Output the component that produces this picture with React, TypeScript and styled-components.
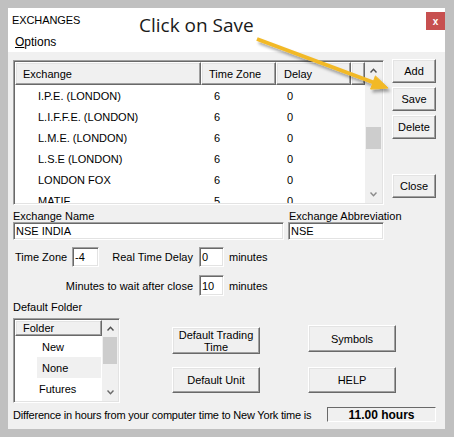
import styled, { createGlobalStyle } from 'styled-components';

const GlobalStyle = createGlobalStyle`
    html, body {
        margin: 0;
        padding: 0;
        background: #c0c0c0;
    }
    body {
        font-family: "Liberation Sans", Arial, sans-serif;
        font-size: 11px;
        color: #000;
    }
`;

const raised = `
    border: 1px solid;
    border-color: #ffffff #696969 #696969 #ffffff;
    box-shadow: inset -1px -1px #a0a0a0, inset 1px 1px #e3e3e3;
`;

const sunken = `
    border: 1px solid;
    border-color: #a0a0a0 #ffffff #ffffff #a0a0a0;
    box-shadow: inset 1px 1px #696969, inset -1px -1px #e3e3e3;
`;

const Screen = styled.div`
    padding: 8px 9px 8px 8px;
    width: 454px;
    height: 437px;
    box-sizing: border-box;
`;

const Window = styled.div`
    position: relative;
    width: 437px;
    height: 421px;
    display: flex;
    flex-direction: column;
    background: #f0f0f0;
`;

const TitleBar = styled.div`
    height: 24px;
    display: flex;
    align-items: flex-start;
    justify-content: space-between;
    background: #fff;
`;

const Title = styled.div`
    padding: 6px 0 0 4px;
    font-size: 11px;
    line-height: 12px;
    letter-spacing: -0.1px;
`;

const CloseBox = styled.div`
    margin-top: 4px;
    width: 19px;
    height: 18px;
    background: #c75050;
    color: #fff;
    font-weight: bold;
    font-size: 10px;
    display: flex;
    align-items: center;
    justify-content: center;
`;

const MenuBar = styled.div`
    height: 20px;
    display: flex;
    align-items: center;
    padding-left: 7px;
    background: #fff;
    font-size: 12px;
`;

const Annotation = styled.div`
    position: absolute;
    left: 131px;
    top: 4px;
    font-family: "Open Sans", sans-serif;
    font-size: 19px;
    color: #1a1a1a;
    line-height: 26px;
`;

const ArrowLayer = styled.svg`
    position: absolute;
    left: 0;
    top: 0;
    pointer-events: none;
`;

const Body = styled.div`
    flex: 1;
    display: flex;
    flex-direction: column;
    padding: 8px 9px 7px 5px;
`;

const TopRow = styled.div`
    display: flex;
    gap: 8px;
`;

const ListBox = styled.div`
    ${sunken}
    width: 371px;
    height: 145px;
    box-sizing: border-box;
    display: grid;
    grid-template-columns: 1fr 17px;
    background: #fff;
    padding: 1px;
`;

const ListMain = styled.div`
    display: flex;
    flex-direction: column;
    overflow: hidden;
`;

const HeaderRow = styled.div<{ $h: number }>`
    display: flex;
    height: ${(p) => p.$h}px;
    flex-shrink: 0;
`;

const HeaderCell = styled.div<{ $w?: number }>`
    ${raised}
    background: #f0f0f0;
    box-sizing: border-box;
    width: ${(p) => (p.$w ? `${p.$w}px` : 'auto')};
    flex: ${(p) => (p.$w ? 'none' : '1')};
    display: flex;
    align-items: center;
    padding-left: 7px;
`;

const Row = styled.div`
    display: flex;
    height: 21px;
    flex-shrink: 0;
    align-items: center;
`;

const Cell = styled.div<{ $w: number; $pad: number }>`
    width: ${(p) => p.$w}px;
    padding-left: ${(p) => p.$pad}px;
    box-sizing: border-box;
    white-space: nowrap;
`;

const Scrollbar = styled.div`
    display: flex;
    flex-direction: column;
    background: #f0f0f0;
`;

const ScrollArrow = styled.div<{ $h: number; $c: string }>`
    height: ${(p) => p.$h}px;
    display: flex;
    align-items: center;
    justify-content: center;
    color: ${(p) => p.$c};
    flex-shrink: 0;
`;

const Track = styled.div`
    flex: 1;
`;

const Thumb = styled.div<{ $top: number; $h: number }>`
    margin: ${(p) => p.$top}px 1px 0 1px;
    height: ${(p) => p.$h}px;
    background: #cdcdcd;
`;

const ButtonCol = styled.div`
    display: flex;
    flex-direction: column;
    gap: 4px;
    margin-top: -1px;
`;

const Button = styled.div<{ $w: number; $h: number; $mt?: number }>`
    ${raised}
    width: ${(p) => p.$w}px;
    height: ${(p) => p.$h}px;
    margin-top: ${(p) => p.$mt ?? 0}px;
    box-sizing: border-box;
    background: #f0f0f0;
    display: flex;
    align-items: center;
    justify-content: center;
    text-align: center;
    line-height: 12px;
    padding: 0 2px;
`;

const FieldGrid = styled.div`
    margin-top: 5px;
    display: grid;
    grid-template-columns: 271px 96px;
    grid-template-rows: 12px 18px;
    column-gap: 4px;
`;

const Label = styled.div<{ $pad?: number }>`
    line-height: 12px;
    padding-left: ${(p) => p.$pad ?? 0}px;
    white-space: nowrap;
`;

const Input = styled.div`
    ${sunken}
    background: #fff;
    box-sizing: border-box;
    height: 100%;
    display: flex;
    align-items: center;
    padding-left: 2px;
    font-size: 11px;
`;

const TimeGrid = styled.div`
    margin-top: 7px;
    display: grid;
    grid-template-columns: 59px 27px 100px 25px auto;
    grid-template-rows: 20px 21px;
    row-gap: 8px;
    align-items: center;
`;

const GridText = styled.div<{ $align: string; $pad: string; $span?: string }>`
    text-align: ${(p) => p.$align};
    padding: ${(p) => p.$pad};
    grid-column: ${(p) => p.$span ?? 'auto'};
    white-space: nowrap;
`;

const FolderLabel = styled.div`
    margin-top: 5px;
    line-height: 12px;
`;

const BottomRow = styled.div`
    margin-top: 5px;
    display: flex;
`;

const FolderBox = styled.div`
    ${sunken}
    width: 107px;
    height: 85px;
    box-sizing: border-box;
    background: #fff;
    padding: 1px;
    display: grid;
    grid-template-columns: 1fr 16px;
`;

const FolderCell = styled.div<{ $pad: number; $sel?: boolean }>`
    margin-left: 22px;
    width: 64px;
    height: 21px;
    padding-left: ${(p) => p.$pad}px;
    box-sizing: border-box;
    display: flex;
    align-items: center;
    background: ${(p) => (p.$sel ? '#f0f0f0' : 'transparent')};
`;

const ActionGrid = styled.div`
    margin: 7px 0 0 52px;
    display: grid;
    grid-template-columns: 88px 88px;
    grid-template-rows: 29px 26px;
    column-gap: 48px;
    row-gap: 13px;
`;

const ActionButton = styled(Button)<{ $self: string }>`
    align-self: ${(p) => p.$self};
`;

const Footer = styled.div`
    margin-top: 4px;
    display: flex;
    align-items: center;
    height: 15px;
`;

const FooterText = styled.span`
    letter-spacing: -0.2px;
`;

const HoursBox = styled.div`
    margin-left: auto;
    width: 109px;
    height: 15px;
    box-sizing: border-box;
    border: 1px solid;
    border-color: #696969 #ffffff #ffffff #696969;
    display: flex;
    align-items: center;
    justify-content: center;
    font-weight: bold;
    font-size: 12px;
`;

const Chevron = ({ up }: { up: boolean }) => (
    <svg width="7" height="5" viewBox="0 0 7 5">
        <path
            d={up ? 'M0.5 4.5 L3.5 1.2 L6.5 4.5' : 'M0.5 0.5 L3.5 3.8 L6.5 0.5'}
            fill="none"
            stroke="currentColor"
            strokeWidth="1.4"
        />
    </svg>
);

const exchanges = [
    { name: 'I.P.E. (LONDON)', tz: '6', delay: '0' },
    { name: 'L.I.F.F.E. (LONDON)', tz: '6', delay: '0' },
    { name: 'L.M.E. (LONDON)', tz: '6', delay: '0' },
    { name: 'L.S.E (LONDON)', tz: '6', delay: '0' },
    { name: 'LONDON FOX', tz: '6', delay: '0' },
    { name: 'MATIF', tz: '5', delay: '0' },
];

const folders = [
    { name: 'New', pad: 5, sel: false },
    { name: 'None', pad: 5, sel: true },
    { name: 'Futures', pad: 2, sel: false },
];

export default function App() {
    return (
        <Screen>
            <GlobalStyle />
            <Window>
                <TitleBar>
                    <Title>EXCHANGES</Title>
                    <CloseBox>x</CloseBox>
                </TitleBar>
                <MenuBar>
                    <span>
                        <u>O</u>ptions
                    </span>
                </MenuBar>
                <Body>
                    <TopRow>
                        <ListBox>
                            <ListMain>
                                <HeaderRow $h={23}>
                                    <HeaderCell $w={186}>Exchange</HeaderCell>
                                    <HeaderCell $w={75}>Time Zone</HeaderCell>
                                    <HeaderCell $w={75}>Delay</HeaderCell>
                                    <HeaderCell />
                                </HeaderRow>
                                {exchanges.map((e) => (
                                    <Row key={e.name}>
                                        <Cell $w={186} $pad={23}>{e.name}</Cell>
                                        <Cell $w={75} $pad={13}>{e.tz}</Cell>
                                        <Cell $w={75} $pad={11}>{e.delay}</Cell>
                                    </Row>
                                ))}
                            </ListMain>
                            <Scrollbar>
                                <ScrollArrow $h={17} $c="#505050">
                                    <Chevron up />
                                </ScrollArrow>
                                <Track>
                                    <Thumb $top={48} $h={22} />
                                </Track>
                                <ScrollArrow $h={17} $c="#8a8a8a">
                                    <Chevron up={false} />
                                </ScrollArrow>
                            </Scrollbar>
                        </ListBox>
                        <ButtonCol>
                            <Button $w={44} $h={24}>Add</Button>
                            <Button $w={44} $h={24}>Save</Button>
                            <Button $w={44} $h={24}>Delete</Button>
                            <Button $w={44} $h={24} $mt={31}>Close</Button>
                        </ButtonCol>
                    </TopRow>

                    <FieldGrid>
                        <Label>Exchange Name</Label>
                        <Label $pad={1}>Exchange Abbreviation</Label>
                        <Input>NSE INDIA</Input>
                        <Input>NSE</Input>
                    </FieldGrid>

                    <TimeGrid>
                        <GridText $align="left" $pad="0 0 0 2px">Time Zone</GridText>
                        <Input>-4</Input>
                        <GridText $align="right" $pad="0 6px 0 0">Real Time Delay</GridText>
                        <Input>0</Input>
                        <GridText $align="left" $pad="0 0 0 5px">minutes</GridText>
                        <GridText $align="right" $pad="0 6px 0 0" $span="1 / 4">
                            Minutes to wait after close
                        </GridText>
                        <Input>10</Input>
                        <GridText $align="left" $pad="0 0 0 5px">minutes</GridText>
                    </TimeGrid>

                    <FolderLabel>Default Folder</FolderLabel>

                    <BottomRow>
                        <FolderBox>
                            <ListMain>
                                <HeaderRow $h={16}>
                                    <HeaderCell>Folder</HeaderCell>
                                </HeaderRow>
                                {folders.map((f) => (
                                    <FolderCell key={f.name} $pad={f.pad} $sel={f.sel}>
                                        {f.name}
                                    </FolderCell>
                                ))}
                            </ListMain>
                            <Scrollbar>
                                <ScrollArrow $h={17} $c="#505050">
                                    <Chevron up />
                                </ScrollArrow>
                                <Track>
                                    <Thumb $top={0} $h={27} />
                                </Track>
                                <ScrollArrow $h={17} $c="#6a6a6a">
                                    <Chevron up={false} />
                                </ScrollArrow>
                            </Scrollbar>
                        </FolderBox>
                        <ActionGrid>
                            <ActionButton $w={88} $h={27} $self="end">
                                Default Trading Time
                            </ActionButton>
                            <ActionButton $w={88} $h={27} $self="start">
                                Symbols
                            </ActionButton>
                            <ActionButton $w={88} $h={26} $self="start">
                                Default Unit
                            </ActionButton>
                            <ActionButton $w={88} $h={26} $self="start">
                                HELP
                            </ActionButton>
                        </ActionGrid>
                    </BottomRow>

                    <Footer>
                        <FooterText>Difference in hours from your computer time to New York time is</FooterText>
                        <HoursBox>11.00 hours</HoursBox>
                    </Footer>
                </Body>

                {/* tutorial overlay */}
                <Annotation>Click on Save</Annotation>
                <ArrowLayer width="437" height="120" viewBox="0 0 437 120">
                    <defs>
                        <filter id="shadow" x="-10%" y="-30%" width="130%" height="180%">
                            <feDropShadow dx="2" dy="3" stdDeviation="1.5" floodColor="#000" floodOpacity="0.35" />
                        </filter>
                    </defs>
                    <g filter="url(#shadow)" fill="#f2b928" stroke="#f2b928">
                        <line x1="249" y1="31" x2="367" y2="75" strokeWidth="4" />
                        <polygon points="380,80 362.6,81.1 367.4,67.9" strokeWidth="1" />
                    </g>
                </ArrowLayer>
            </Window>
        </Screen>
    );
}
